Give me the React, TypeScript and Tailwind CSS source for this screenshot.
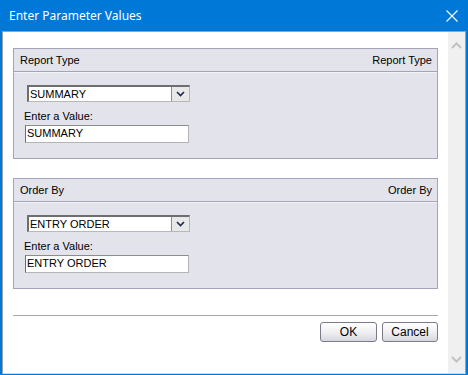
import React from 'react';

const font = { fontFamily: '"Liberation Sans", Arial, sans-serif' };

function ParamPanel({ title, value }: { title: string; value: string }) {
  return (
    <div className="border border-[#a4a4b8] bg-[#e3e3eb]">
      {/* header */}
      <div className="h-[23px] flex items-center justify-between pl-[6px] pr-[5px] border-b border-[#a4a4b8] text-[11px] text-black">
        <span>{title}</span>
        <span>{title}</span>
      </div>
      <div className="border-t border-white/60 pt-[12px] pb-[15px] pl-[10px]">
        {/* select box */}
        <div className="ml-[3px] w-[163px] h-[17px] flex bg-white border-t-2 border-l-2 border-[#6e6e6e] border-r border-b border-r-[#b8b8b8] border-b-[#b8b8b8]">
          <span className="flex-1 text-[11px] leading-[14px] pl-[1px] text-black">{value}</span>
          <span className="w-[18px] h-full flex items-center justify-center bg-[#e8e8e8] border-l border-[#8c8c8c]">
            <svg width="9" height="6" viewBox="0 0 9 6">
              <path d="M1 1 L4.5 4.5 L8 1" fill="none" stroke="#1a2a4a" strokeWidth="1.6" />
            </svg>
          </span>
        </div>
        <div className="mt-[8px] text-[11px] leading-[13px] text-black">Enter a Value:</div>
        <div className="mt-[2px] ml-[1px] w-[164px] h-[18px] bg-white border border-[#b4b4b4] border-l-[#6e6e6e] border-t-[#8c8c8c] text-[11px] leading-[15px] pl-[1px] text-black">
          {value}
        </div>
      </div>
    </div>
  );
}

export default function App() {
  return (
    <div className="w-[468px] h-[375px] flex flex-col bg-[#0078d7]" style={font}>
      {/* title bar */}
      <div className="h-[31px] shrink-0 flex items-center justify-between pl-[9px] pr-[8px] text-white">
        <span className="text-[12px]" style={{ fontFamily: '"Noto Sans", "Liberation Sans", sans-serif' }}>
          Enter Parameter Values
        </span>
        <svg width="12" height="12" viewBox="0 0 12 12" className="mr-[2px]">
          <path d="M0.5 0.5 L11.5 11.5 M11.5 0.5 L0.5 11.5" stroke="white" strokeWidth="1.1" />
        </svg>
      </div>
      {/* client area */}
      <div className="flex-1 mx-[2px] mb-[1px] flex bg-white border-t border-l border-r border-b border-[#a0a0a0] border-b-[#d8d8d8]">
        <div className="flex-1 pl-[10px] pr-[10px] pt-[16px] flex flex-col">
          <ParamPanel title="Report Type" value="SUMMARY" />
          <div className="h-[19px]" />
          <ParamPanel title="Order By" value="ENTRY ORDER" />
          <div className="mt-[26px] border-t border-[#a8a8b4]" />
          <div className="mt-[6px] flex justify-end gap-[5px]">
            <button className="w-[57px] h-[20px] rounded-[3px] border border-[#7a7a8a] bg-gradient-to-b from-white via-[#f0f0f4] to-[#d6d6de] text-[12px] text-black">
              OK
            </button>
            <button className="w-[56px] h-[20px] rounded-[3px] border border-[#7a7a8a] bg-gradient-to-b from-white via-[#f0f0f4] to-[#d6d6de] text-[12px] text-black">
              Cancel
            </button>
          </div>
        </div>
        {/* scrollbar */}
        <div className="w-[17px] bg-[#f0f0f0] flex flex-col justify-between items-center py-[10px]">
          <svg width="11" height="7" viewBox="0 0 11 7">
            <path d="M1 6 L5.5 1.5 L10 6" fill="none" stroke="#c2c2c2" strokeWidth="2" />
          </svg>
          <svg width="11" height="7" viewBox="0 0 11 7">
            <path d="M1 1 L5.5 5.5 L10 1" fill="none" stroke="#c2c2c2" strokeWidth="2" />
          </svg>
        </div>
      </div>
    </div>
  );
}
